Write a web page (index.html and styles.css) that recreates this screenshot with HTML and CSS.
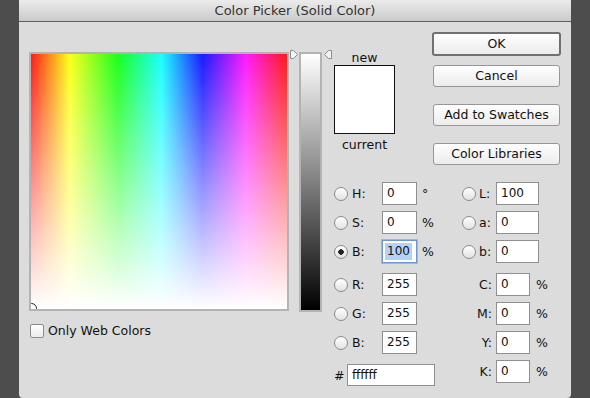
FILE: index.html
```html
<!DOCTYPE html>
<html lang="en">
  <head>
    <meta charset="utf-8">
    <title>Color Picker (Solid Color)</title>
    <link rel="stylesheet" href="styles.css">
  </head>
  <body>
    <div class="window">
      <div class="titlebar">Color Picker (Solid Color)</div>

      <div class="main">
        <!-- colour field + brightness slider -->
        <div class="left">
          <div class="picker">
            <div class="field"><span class="marker"></span></div>
            <div class="slider-wrap">
              <svg class="arrow arrow-l" viewBox="0 0 8 9" width="8" height="9"><path d="M0.5 0.5H3.5L7.5 4.5L3.5 8.5H0.5Z" fill="#f2f2f2" stroke="#8c8c8c"/></svg>
              <div class="slider"></div>
              <svg class="arrow arrow-r" viewBox="0 0 8 9" width="8" height="9"><path d="M7.5 0.5H4.5L0.5 4.5L4.5 8.5H7.5Z" fill="#f2f2f2" stroke="#8c8c8c"/></svg>
            </div>
          </div>
          <div class="check"><span class="box"></span>Only Web Colors</div>
        </div>

        <div class="right">
          <div class="top">
            <div class="swatch">
              <div class="sw-label">new</div>
              <div class="sw-box"></div>
              <div class="sw-label sw-current">current</div>
            </div>
            <div class="buttons">
              <div class="btn btn-default">OK</div>
              <div class="btn">Cancel</div>
              <div class="btn">Add to Swatches</div>
              <div class="btn">Color Libraries</div>
            </div>
          </div>

          <div class="fields">
            <div class="fcol fcol-a">
              <div class="row"><span class="radio"></span><span class="lbl">H:</span><span class="inp">0</span><span class="unit">°</span></div>
              <div class="row"><span class="radio"></span><span class="lbl">S:</span><span class="inp">0</span><span class="unit">%</span></div>
              <div class="row"><span class="radio on"></span><span class="lbl">B:</span><span class="inp focus"><span class="sel">100</span></span><span class="unit">%</span></div>
              <div class="row grp"><span class="radio"></span><span class="lbl">R:</span><span class="inp">255</span></div>
              <div class="row"><span class="radio"></span><span class="lbl">G:</span><span class="inp">255</span></div>
              <div class="row"><span class="radio"></span><span class="lbl">B:</span><span class="inp">255</span></div>
              <div class="row grp hex"><span class="hash">#</span><span class="inp inp-hex">ffffff</span></div>
            </div>
            <div class="fcol fcol-b">
              <div class="row"><span class="radio"></span><span class="lbl">L:</span><span class="inp inp-lab">100</span></div>
              <div class="row"><span class="radio"></span><span class="lbl">a:</span><span class="inp inp-lab">0</span></div>
              <div class="row"><span class="radio"></span><span class="lbl">b:</span><span class="inp inp-lab">0</span></div>
              <div class="row grp"><span class="lbl lbl-cmyk">C:</span><span class="inp inp-cmyk">0</span><span class="unit unit-cmyk">%</span></div>
              <div class="row"><span class="lbl lbl-cmyk">M:</span><span class="inp inp-cmyk">0</span><span class="unit unit-cmyk">%</span></div>
              <div class="row"><span class="lbl lbl-cmyk">Y:</span><span class="inp inp-cmyk">0</span><span class="unit unit-cmyk">%</span></div>
              <div class="row"><span class="lbl lbl-cmyk">K:</span><span class="inp inp-cmyk">0</span><span class="unit unit-cmyk">%</span></div>
            </div>
          </div>
        </div>
      </div>
    </div>
  </body>
</html>
```

FILE: styles.css
```css
body{
  margin:0;
  background-color:#4d4d4d;
  font-family:"DejaVu Sans", sans-serif;
  font-size:12.5px;
  color:#111;
}
.window{
  margin-left:19px;
  width:552px;
  height:398px;
  background-color:#dcdcdc;
  border-radius:0 0 4px 4px;
  overflow:hidden;
}
.titlebar{
  height:21px;
  line-height:22px;
  border-bottom:1px solid #5c5c5c;
  background:linear-gradient(#ebebeb,#cbcbcb);
  text-align:center;
  font-size:13px;
  color:#333;
}
.main{
  display:flex;
  padding-left:10px;
}

/* left side */
.left{
  width:303px;
  margin-top:30px;
}
.picker{
  display:flex;
  align-items:flex-start;
}
.field{
  position:relative;
  width:256px;
  height:255px;
  border:2px solid #b3b3b3;
  overflow:hidden;
  background:
    linear-gradient(rgba(255,255,255,0),#fff),
    linear-gradient(to right,#ff1a1a,#ffff1a 15%,#1aff1a 34%,#1affff 51%,#1a1aff 67%,#ff1aff 84%,#ff1a1a);
}
.marker{
  position:absolute;
  left:-5px;
  bottom:-5px;
  width:9px;
  height:9px;
  border:1px solid #222;
  border-radius:50%;
}
.slider-wrap{
  position:relative;
  margin-left:1px;
  padding-left:9px;
  width:33px;
}
.slider{
  width:19px;
  height:256px;
  border:2px solid #b3b3b3;
  background:linear-gradient(#fff,#000);
}
.arrow{
  position:absolute;
  top:-2px;
}
.arrow-l{ left:0; }
.arrow-r{ left:34px; }

.check{
  display:flex;
  align-items:center;
  margin-top:11px;
  margin-left:1px;
}
.box{
  width:12px;
  height:12px;
  border:1px solid #8c8c8c;
  border-radius:2px;
  background:linear-gradient(#fff,#ebebeb);
  margin-right:4px;
}

/* right side */
.right{
  width:227px;
  margin-left:2px;
  padding-top:10px;
}
.top{
  display:flex;
  justify-content:space-between;
}
.swatch{
  width:61px;
  margin-top:18px;
  text-align:center;
}
.sw-label{
  line-height:15px;
}
.sw-box{
  height:67px;
  border:1px solid #111;
  background-color:#fff;
}
.sw-current{
  margin-top:3px;
}
.buttons{
  width:129px;
  display:flex;
  flex-direction:column;
}
.btn{
  height:20px;
  line-height:20px;
  margin:0 1px 17px;
  border:1px solid #979797;
  border-radius:3px;
  background:linear-gradient(#fefefe,#ececec);
  text-align:center;
}
.btn:last-child{ margin-bottom:0; }
.btn-default{
  margin:0 0 9px;
  border:2px solid #707070;
}

.fields{
  display:flex;
  margin-top:17px;
}
.fcol{
  display:flex;
  flex-direction:column;
  gap:6px;
}
.fcol-a{ width:128px; }
.row{
  display:flex;
  align-items:center;
  height:23px;
}
.grp{ margin-top:4px; }
.radio{
  width:12px;
  height:12px;
  border:1px solid #8a8a8a;
  border-radius:50%;
  background:linear-gradient(#fff,#e2e2e2);
  margin-right:4px;
}
.radio.on{
  background:
    radial-gradient(circle,#222 0 2.5px,transparent 3px),
    linear-gradient(#fff,#e2e2e2);
}
.lbl{ width:30px; }
.inp{
  box-sizing:border-box;
  width:35px;
  height:23px;
  line-height:21px;
  padding-left:4px;
  border:1px solid #8f8f8f;
  background-color:#fff;
  font-size:12px;
}
.inp.focus{
  padding-left:2px;
  border-color:#6f97cf;
  box-shadow:0 0 0 1px #97b9e6;
}
.sel{
  display:inline-block;
  line-height:17px;
  padding:0 2px;
  background-color:#b4d2f6;
}
.unit{ margin-left:5px; }
.hash{ width:13px; }
.hex .inp-hex{
  width:88px;
  height:22px;
  line-height:20px;
}
.hex{ height:22px; }

.fcol-b .radio{ margin-right:3px; }
.fcol-b .lbl{ width:17px; }
.inp-lab{ width:43px; }
.fcol-b .lbl-cmyk{
  width:30px;
  padding-right:4px;
  text-align:right;
}
.inp-cmyk{ width:34px; }
.unit-cmyk{ margin-left:6px; }
```
